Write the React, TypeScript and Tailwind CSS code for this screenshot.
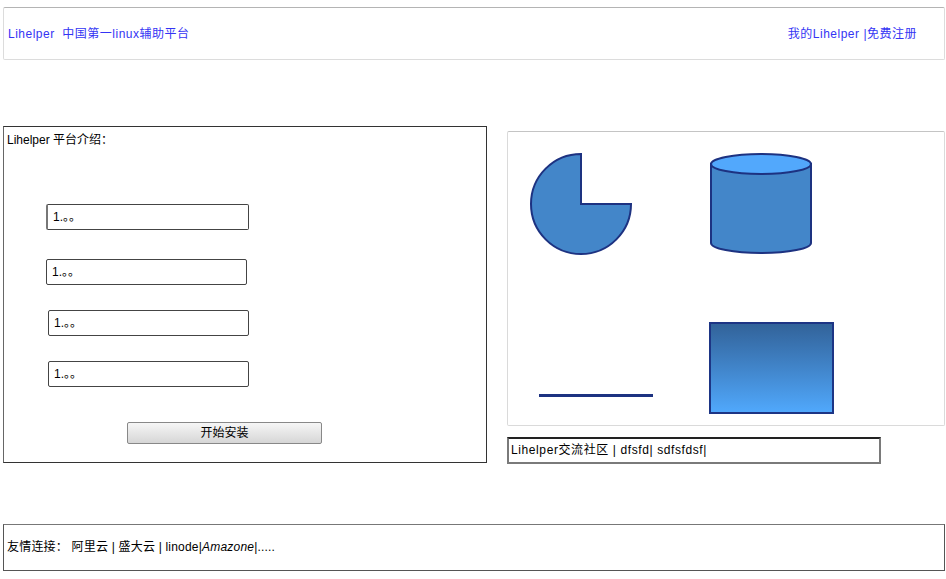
const sans = "font-['Liberation_Sans','Noto_Sans_CJK_SC',sans-serif]";

function StepInput({ className }: { className: string }) {
  return (
    <div
      className={`h-[26px] flex items-center pl-[5px] border border-[#444] rounded-[2px] bg-white text-[12px] text-black ${className}`}
    >
      1.。。
    </div>
  );
}

function Pie() {
  return (
    <svg width="102" height="103" viewBox="0 0 102 103">
      <path
        d="M51 51 L51 1 A50 50 0 1 0 101 51 Z"
        fill="#4386c9"
        stroke="#1d3281"
        strokeWidth="2"
        strokeLinejoin="miter"
      />
    </svg>
  );
}

function Cylinder() {
  return (
    <svg width="102" height="102" viewBox="0 0 102 102">
      <path
        d="M1 11 L1 90 A50 10 0 0 0 101 90 L101 11 Z"
        fill="#4386c9"
        stroke="#1d3281"
        strokeWidth="2"
      />
      <ellipse cx="51" cy="11" rx="50" ry="10" fill="#52a8fc" stroke="#1d3281" strokeWidth="2" />
    </svg>
  );
}

export default function App() {
  return (
    <div className={`w-[946px] h-[579px] bg-white ${sans} text-[12px] leading-[15px]`}>
      {/* Header */}
      <div className="ml-[3px] mr-[1px] mt-[7px] h-[53px] border border-[#dcdcdc] border-t-[#b4b4b4] rounded-[2px] flex items-center justify-between pt-[1px] pl-[4px] pr-[27px] text-[#3434f4] tracking-[0.5px]">
        <span>Lihelper&nbsp; 中国第一linux辅助平台</span>
        <span>我的Lihelper |免费注册</span>
      </div>

      {/* Main */}
      <div className="flex mt-[66px] ml-[3px]">
        {/* Left panel */}
        <div className="w-[484px] h-[337px] border border-[#333] border-l-[#666] pt-[6px] pl-[3px] flex flex-col items-start">
          <div className="text-black">Lihelper 平台介绍：</div>
          <StepInput className="mt-[56px] ml-[39px] w-[203px] border-l-2 border-l-[#777]" />
          <StepInput className="mt-[29px] ml-[39px] w-[201px]" />
          <StepInput className="mt-[25px] ml-[41px] w-[201px]" />
          <StepInput className="mt-[25px] ml-[41px] w-[201px]" />
          <button className="mt-[35px] ml-[120px] w-[195px] h-[22px] border border-[#888] rounded-[2px] bg-gradient-to-b from-[#f6f6f6] to-[#d6d6d6] text-black text-[12px] pt-[1px]">
            开始安装
          </button>
        </div>

        {/* Right column */}
        <div className="ml-[20px] mt-[5px] flex flex-col">
          <div className="w-[438px] h-[295px] border border-[#dadada] border-t-[#c4c4c4] rounded-[2px] pt-[21px] pl-[22px]">
            <div className="flex items-start">
              <Pie />
              <div className="ml-[78px]">
                <Cylinder />
              </div>
            </div>
            <div className="flex items-start mt-[66px]">
              <div className="ml-[9px] mt-[72px] w-[114px] h-[3px] bg-[#1d3281]" />
              <div className="ml-[56px] w-[125px] h-[92px] border-2 border-[#1d3585] bg-gradient-to-b from-[#32639a] to-[#50a8fc]" />
            </div>
          </div>
          <div className="mt-[11px] w-[374px] h-[27px] border-2 border-[#7a7a7a] border-t-[#222] flex items-center pl-[2px] text-black tracking-[0.6px]">
            Lihelper交流社区 | dfsfd| sdfsfdsf|
          </div>
        </div>
      </div>

      {/* Footer */}
      <div className="ml-[3px] mr-[1px] mt-[60px] h-[47px] border border-[#555] border-t-[#777] flex items-center pl-[3px] text-black tracking-[0.2px]">
        友情连接： 阿里云 | 盛大云 | linode|<i>Amazone</i>|.....
      </div>
    </div>
  );
}
